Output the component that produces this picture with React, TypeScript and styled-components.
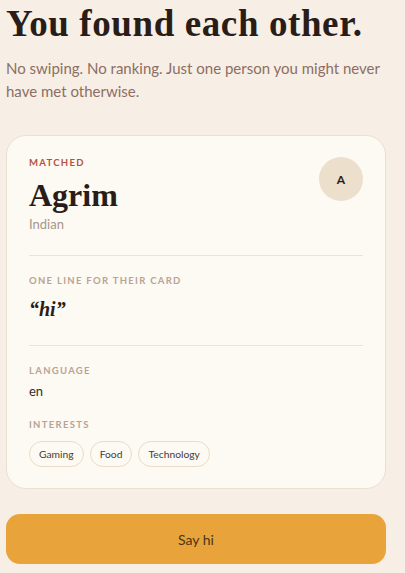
import React from "react";
import styled, { createGlobalStyle } from "styled-components";

const GlobalStyle = createGlobalStyle`
  html, body {
    margin: 0;
    padding: 0;
    background: #f7efe6;
  }
  * { box-sizing: border-box; }
`;

const serif = `"Liberation Serif", "DejaVu Serif", serif`;
const sans = `Lato, "Noto Sans", "Liberation Sans", sans-serif`;

const Page = styled.div`
  width: 405px;
  min-height: 573px;
  padding: 3px 19px 0 6px;
  background: #f7efe6;
  font-family: ${sans};
`;

const Title = styled.h1`
  margin: 0;
  font-family: ${serif};
  font-weight: 700;
  font-size: 37px;
  line-height: 42px;
  letter-spacing: 0.6px;
  color: #2a1d17;
  white-space: nowrap;
`;

const Lead = styled.p`
  margin: 12px 0 0;
  font-size: 15px;
  line-height: 23px;
  color: #8d6e62;
`;

const Card = styled.section`
  margin-top: 32px;
  background: #fdf9f3;
  border: 1px solid #ebdfcf;
  border-radius: 20px;
  padding: 20px 22px 21px;
`;

const Header = styled.div`
  display: flex;
  justify-content: space-between;
  align-items: flex-start;
`;

const Label = styled.div<{ $accent?: boolean }>`
  font-size: 9.5px;
  line-height: 14px;
  font-weight: 700;
  letter-spacing: 1.3px;
  text-transform: uppercase;
  color: ${(p) => (p.$accent ? "#b5523f" : "#b8a494")};
`;

const Name = styled.div`
  margin-top: 6px;
  font-family: ${serif};
  font-weight: 700;
  font-size: 32px;
  line-height: 38px;
  color: #2a1d17;
`;

const Sub = styled.div`
  margin-top: 1px;
  font-size: 13px;
  line-height: 18px;
  color: #a8968a;
`;

const Avatar = styled.div`
  width: 44px;
  height: 44px;
  margin-top: 1px;
  border-radius: 50%;
  background: #ece0cc;
  display: flex;
  align-items: center;
  justify-content: center;
  font-size: 12px;
  font-weight: 700;
  color: #2a1d17;
`;

const Divider = styled.hr`
  border: 0;
  height: 1px;
  background: #ece2d6;
  margin: 22px 0 18px;
`;

const Quote = styled.div`
  margin-top: 7px;
  font-family: ${serif};
  font-style: italic;
  font-weight: 700;
  font-size: 20px;
  line-height: 28px;
  color: #2a1d17;
`;

const Value = styled.div`
  margin-top: 4px;
  margin-bottom: 18px;
  font-size: 13px;
  line-height: 18px;
  color: #3a2c24;
`;

const Chips = styled.div`
  display: flex;
  gap: 6px;
  margin-top: 9px;
`;

const Chip = styled.span`
  height: 26px;
  padding: 0 9px;
  display: inline-flex;
  align-items: center;
  border: 1px solid #eadcc8;
  border-radius: 13px;
  font-size: 10.3px;
  color: #4a3a30;
`;

const Button = styled.button`
  display: block;
  width: 100%;
  height: 50px;
  margin-top: 25px;
  border: 0;
  border-radius: 14px;
  background: #e8a43a;
  color: #4a3418;
  font-family: ${sans};
  font-size: 14px;
  cursor: pointer;
`;

export default function App() {
  const interests = ["Gaming", "Food", "Technology"];
  return (
    <>
      <GlobalStyle />
      <Page>
        <Title>You found each other.</Title>
        <Lead>
          No swiping. No ranking. Just one person you might never have met
          otherwise.
        </Lead>
        <Card>
          <Header>
            <div>
              <Label $accent>Matched</Label>
              <Name>Agrim</Name>
              <Sub>Indian</Sub>
            </div>
            <Avatar>A</Avatar>
          </Header>
          <Divider />
          <Label>One line for their card</Label>
          <Quote>“hi”</Quote>
          <Divider />
          <Label>Language</Label>
          <Value>en</Value>
          <Label>Interests</Label>
          <Chips>
            {interests.map((i) => (
              <Chip key={i}>{i}</Chip>
            ))}
          </Chips>
        </Card>
        <Button>Say hi</Button>
      </Page>
    </>
  );
}
